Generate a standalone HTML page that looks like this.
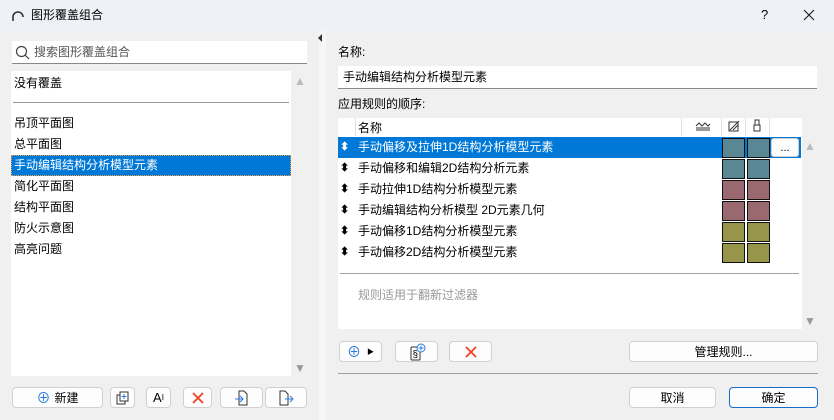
<!DOCTYPE html>
<html><head><meta charset="utf-8"><style>
*{box-sizing:border-box;margin:0;padding:0}
body{width:834px;height:420px;overflow:hidden;background:#f0f0f0;font-family:"Liberation Sans","Noto Sans CJK SC",sans-serif;font-size:12px;color:#000;position:relative}
.a{position:absolute}
.t{position:absolute;white-space:nowrap;line-height:14px}
.btn{position:absolute;background:#fdfdfd;border:1px solid #d0d0d0;border-radius:4px;display:flex;align-items:center;justify-content:center}
.sw{position:absolute;width:23px;height:20px;border:1px solid #111}
.arr{position:absolute;font-size:12px;line-height:12px}
.srt{position:absolute;font-size:11px;line-height:12px;font-weight:bold}
</style></head><body>
<div class="a" style="left:0;top:0;width:834px;height:31px;background:#eef2f7"></div>
<svg class="a" style="left:11px;top:9px" width="14" height="14"><path d="M2 12 V8 A5 5 0 0 1 12 8" stroke="#333" stroke-width="1.6" fill="none"/></svg>
<div class="t" style="left:31px;top:8px">图形覆盖组合</div>
<div class="t" style="left:761px;top:8px;font-size:13px">?</div>
<svg class="a" style="left:803px;top:9px" width="12" height="12"><path d="M1 1L11 11M11 1L1 11" stroke="#222" stroke-width="1.2"/></svg>
<div class="a" style="left:319px;top:31px;width:7px;height:389px;background:#f6f6f6"></div>
<div class="a" style="left:318px;top:34px;width:0;height:0;border-top:4px solid transparent;border-bottom:4px solid transparent;border-right:4px solid #333"></div>

<div class="a" style="left:12px;top:41px;width:295px;height:23px;background:#fff;border-bottom:1px solid #888"></div>
<svg class="a" style="left:15px;top:45px" width="15" height="15"><circle cx="6.5" cy="6.5" r="5" stroke="#444" fill="none" stroke-width="1.2"/><path d="M10 10L14 14" stroke="#444" stroke-width="1.2"/></svg>
<div class="t" style="left:34px;top:45px;color:#555">搜索图形覆盖组合</div>

<div class="a" style="left:11px;top:71px;width:280px;height:305px;background:#fff"></div>
<div class="arr" style="left:294px;top:75px;color:#bbb">▲</div>
<div class="arr" style="left:294px;top:362px;color:#999">▼</div>
<div class="t" style="left:14px;top:76px">没有覆盖</div>
<div class="a" style="left:13px;top:102px;width:276px;height:1px;background:#999"></div>
<div class="t" style="left:14px;top:116px">吊顶平面图</div>
<div class="t" style="left:14px;top:137px">总平面图</div>
<div class="a" style="left:11px;top:155px;width:280px;height:21px;background:#0078d7;border:1px dotted #f0a040"></div>
<div class="t" style="left:14px;top:158px;color:#fff">手动编辑结构分析模型元素</div>
<div class="t" style="left:14px;top:179px">简化平面图</div>
<div class="t" style="left:14px;top:200px">结构平面图</div>
<div class="t" style="left:14px;top:221px">防火示意图</div>
<div class="t" style="left:14px;top:242px">高亮问题</div>

<div class="btn" style="left:12px;top:387px;width:91px;height:21px"><span style="color:#2a7be0;font-size:14px;margin-right:4px">⊕</span>新建</div>
<div class="btn" style="left:110px;top:387px;width:25px;height:21px"><svg width="14" height="14"><rect x="1" y="4" width="8" height="9" fill="none" stroke="#333"/><rect x="4" y="1" width="8" height="9" fill="#fff" stroke="#333"/><path d="M8 3v5M5.5 5.5h5" stroke="#2a7be0"/></svg></div>
<div class="btn" style="left:146px;top:387px;width:25px;height:21px;font-size:13px">A<sup style="font-size:8px">I</sup></div>
<div class="btn" style="left:183px;top:387px;width:29px;height:21px"><svg width="14" height="14"><path d="M2 2L12 12M12 2L2 12" stroke="#f04020" stroke-width="1.8"/></svg></div>
<div class="btn" style="left:220px;top:387px;width:43px;height:21px"><svg width="16" height="16"><path d="M5 1h5l3 3v11H5z" fill="none" stroke="#333"/><path d="M1 9h8M6 6l3 3-3 3" stroke="#2a7be0" fill="none"/></svg></div>
<div class="btn" style="left:265px;top:387px;width:42px;height:21px"><svg width="16" height="16"><path d="M2 1h5l3 3v11H2z" fill="none" stroke="#333"/><path d="M7 9h8M12 6l3 3-3 3" stroke="#2a7be0" fill="none"/></svg></div>

<div class="t" style="left:338px;top:45px">名称:</div>
<div class="a" style="left:338px;top:66px;width:479px;height:23px;background:#fff;border-bottom:1px solid #888"></div>
<div class="t" style="left:343px;top:70px">手动编辑结构分析模型元素</div>
<div class="t" style="left:338px;top:97px">应用规则的顺序:</div>

<div class="a" style="left:338px;top:118px;width:464px;height:211px;background:#fff"></div>
<div class="a" style="left:355px;top:118px;width:1px;height:18px;background:#e0e0e0"></div>
<div class="a" style="left:681px;top:118px;width:1px;height:18px;background:#e0e0e0"></div>
<div class="a" style="left:721px;top:118px;width:1px;height:18px;background:#e0e0e0"></div>
<div class="a" style="left:745px;top:118px;width:1px;height:18px;background:#e0e0e0"></div>
<div class="a" style="left:769px;top:118px;width:1px;height:18px;background:#e0e0e0"></div>
<div class="t" style="left:358px;top:121px">名称</div>
<svg class="a" style="left:695px;top:121px" width="16" height="10"><path d="M1 5l3-3 3 3 3-3 3 3 2-2M1 7h14M1 9h14" stroke="#333" fill="none"/></svg>
<svg class="a" style="left:728px;top:120px" width="12" height="12"><rect x="1" y="2" width="9" height="9" fill="none" stroke="#333"/><path d="M2 10L11 1M5 10l5-5" stroke="#333"/></svg>
<svg class="a" style="left:752px;top:119px" width="10" height="13"><path d="M3 1h4v5H3zM2 6h6v6H2z" fill="none" stroke="#333"/></svg>

<div class="a" style="left:338px;top:137px;width:463px;height:21px;background:#0078d7"></div>
<div class="btn" style="left:771px;top:138px;width:28px;height:19px;font-size:11px;border-radius:3px">...</div>
<div class="arr" style="left:804px;top:140px;color:#bbb">▲</div>
<div class="arr" style="left:804px;top:315px;color:#999">▼</div>

<div class="srt" style="left:340px;top:141px;color:#fff">⬍</div>
<div class="t" style="left:358px;top:140px;color:#fff">手动偏移及拉伸1D结构分析模型元素</div>
<div class="sw" style="left:722px;top:138px;background:#5a8794"></div><div class="sw" style="left:747px;top:138px;background:#5a8794"></div>
<div class="srt" style="left:340px;top:162px">⬍</div>
<div class="t" style="left:358px;top:161px">手动偏移和编辑2D结构分析元素</div>
<div class="sw" style="left:722px;top:159px;background:#5a8794"></div><div class="sw" style="left:747px;top:159px;background:#5a8794"></div>
<div class="srt" style="left:340px;top:183px">⬍</div>
<div class="t" style="left:358px;top:182px">手动拉伸1D结构分析模型元素</div>
<div class="sw" style="left:722px;top:180px;background:#99696f"></div><div class="sw" style="left:747px;top:180px;background:#99696f"></div>
<div class="srt" style="left:340px;top:204px">⬍</div>
<div class="t" style="left:358px;top:203px">手动编辑结构分析模型 2D元素几何</div>
<div class="sw" style="left:722px;top:201px;background:#99696f"></div><div class="sw" style="left:747px;top:201px;background:#99696f"></div>
<div class="srt" style="left:340px;top:225px">⬍</div>
<div class="t" style="left:358px;top:224px">手动偏移1D结构分析模型元素</div>
<div class="sw" style="left:722px;top:222px;background:#96954a"></div><div class="sw" style="left:747px;top:222px;background:#96954a"></div>
<div class="srt" style="left:340px;top:246px">⬍</div>
<div class="t" style="left:358px;top:245px">手动偏移2D结构分析模型元素</div>
<div class="sw" style="left:722px;top:243px;background:#96954a"></div><div class="sw" style="left:747px;top:243px;background:#96954a"></div>
<div class="a" style="left:340px;top:273px;width:459px;height:1px;background:#a0a0a0"></div>
<div class="t" style="left:358px;top:288px;color:#999">规则适用于翻新过滤器</div>

<div class="btn" style="left:339px;top:341px;width:43px;height:21px"><span style="color:#2a7be0;font-size:14px">⊕</span><span style="font-size:7px;margin-left:6px">▶</span></div>
<div class="btn" style="left:395px;top:341px;width:43px;height:21px"><svg width="20" height="18"><rect x="4" y="4" width="9" height="13" rx="1" fill="none" stroke="#333"/><text x="5.5" y="14.5" font-size="10" font-family="Liberation Sans">§</text><circle cx="14" cy="5" r="4" fill="#fff" stroke="#2a7be0"/><path d="M14 2.5v5M11.5 5h5" stroke="#2a7be0"/></svg></div>
<div class="btn" style="left:449px;top:341px;width:43px;height:21px"><svg width="14" height="14"><path d="M2 2L12 12M12 2L2 12" stroke="#f04020" stroke-width="1.8"/></svg></div>
<div class="btn" style="left:629px;top:341px;width:189px;height:21px">管理规则...</div>
<div class="a" style="left:338px;top:373px;width:480px;height:1px;background:#a0a0a0"></div>
<div class="btn" style="left:629px;top:387px;width:87px;height:21px">取消</div>
<div class="btn" style="left:729px;top:387px;width:89px;height:21px;border-color:#1a6ac8">确定</div>
</body></html>
